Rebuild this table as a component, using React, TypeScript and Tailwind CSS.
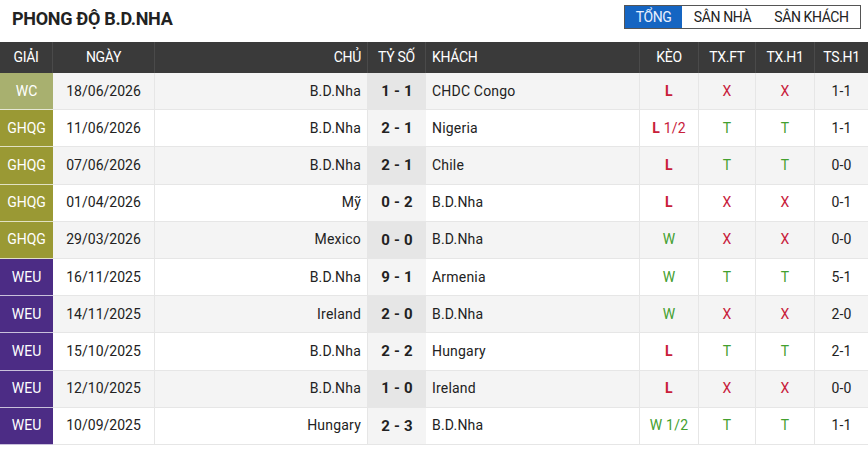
import React from "react";

type Row = {
  league: "WC" | "GHQG" | "WEU";
  date: string;
  home: string;
  score: string;
  away: string;
  keo: string;
  txft: "T" | "X";
  txh1: "T" | "X";
  tsh1: string;
};

const rows: Row[] = [
  { league: "WC", date: "18/06/2026", home: "B.D.Nha", score: "1 - 1", away: "CHDC Congo", keo: "L", txft: "X", txh1: "X", tsh1: "1-1" },
  { league: "GHQG", date: "11/06/2026", home: "B.D.Nha", score: "2 - 1", away: "Nigeria", keo: "L 1/2", txft: "T", txh1: "T", tsh1: "1-1" },
  { league: "GHQG", date: "07/06/2026", home: "B.D.Nha", score: "2 - 1", away: "Chile", keo: "L", txft: "T", txh1: "T", tsh1: "0-0" },
  { league: "GHQG", date: "01/04/2026", home: "Mỹ", score: "0 - 2", away: "B.D.Nha", keo: "L", txft: "X", txh1: "X", tsh1: "0-1" },
  { league: "GHQG", date: "29/03/2026", home: "Mexico", score: "0 - 0", away: "B.D.Nha", keo: "W", txft: "X", txh1: "X", tsh1: "0-0" },
  { league: "WEU", date: "16/11/2025", home: "B.D.Nha", score: "9 - 1", away: "Armenia", keo: "W", txft: "T", txh1: "T", tsh1: "5-1" },
  { league: "WEU", date: "14/11/2025", home: "Ireland", score: "2 - 0", away: "B.D.Nha", keo: "W", txft: "X", txh1: "X", tsh1: "2-0" },
  { league: "WEU", date: "15/10/2025", home: "B.D.Nha", score: "2 - 2", away: "Hungary", keo: "L", txft: "T", txh1: "T", tsh1: "2-1" },
  { league: "WEU", date: "12/10/2025", home: "B.D.Nha", score: "1 - 0", away: "Ireland", keo: "L", txft: "X", txh1: "X", tsh1: "0-0" },
  { league: "WEU", date: "10/09/2025", home: "Hungary", score: "2 - 3", away: "B.D.Nha", keo: "W 1/2", txft: "T", txh1: "T", tsh1: "1-1" },
];

const leagueBg: Record<Row["league"], string> = {
  WC: "bg-[#a8b06f]",
  GHQG: "bg-[#9a9934]",
  WEU: "bg-[#4c2c85]",
};

const RED = "text-[#c8203a]";
const GREEN = "text-[#43a02f]";

function Keo({ v }: { v: string }) {
  const isW = v.startsWith("W");
  const [a, b] = v.split(" ");
  return (
    <span className={isW ? GREEN : RED}>
      <span className={isW ? "" : "font-bold"}>{a}</span>
      {b ? <span> {b}</span> : null}
    </span>
  );
}

const cols = "grid grid-cols-[53px_102px_213px_58px_214px_59px_57px_59px_53px]";

export default function App() {
  return (
    <div className="w-[868px] h-[451px] bg-white overflow-hidden" style={{ fontFamily: "Roboto, 'Liberation Sans', sans-serif" }}>
      <div className="h-[42px] flex items-start justify-between">
        <div className="pl-[12px] pt-[5px] text-[18px] font-bold text-[#222] tracking-[-0.3px]">PHONG ĐỘ B.D.NHA</div>
        <div className="mt-[5px] mr-[7px] flex h-[24px] border border-[#555] text-[14px] tracking-[-0.4px]">
          <div className="w-[57px] bg-[#1565c2] text-[#e8f0ff] flex items-center justify-center">TỔNG</div>
          <div className="w-[81px] text-[#222] flex items-center justify-center">SÂN NHÀ</div>
          <div className="w-[97px] text-[#222] flex items-center justify-center">SÂN KHÁCH</div>
        </div>
      </div>
      <div className={`${cols} h-[31px] bg-[#3a3a3a] text-white text-[14px] tracking-[-0.3px]`}>
        <div className="flex items-center justify-center border-r border-[#4a4a4a]">GIẢI</div>
        <div className="flex items-center justify-center border-r border-[#4a4a4a]">NGÀY</div>
        <div className="flex items-center justify-end pr-[6px] border-r border-[#4a4a4a]">CHỦ</div>
        <div className="flex items-center justify-center border-r border-[#4a4a4a]">TỶ SỐ</div>
        <div className="flex items-center justify-start pl-[6px] border-r border-[#4a4a4a]">KHÁCH</div>
        <div className="flex items-center justify-center border-r border-[#4a4a4a]">KÈO</div>
        <div className="flex items-center justify-center border-r border-[#4a4a4a]">TX.FT</div>
        <div className="flex items-center justify-center border-r border-[#4a4a4a]">TX.H1</div>
        <div className="flex items-center justify-center">TS.H1</div>
      </div>
      {rows.map((r, i) => {
        const odd = i % 2 === 0;
        const rowBg = odd ? "bg-[#f4f4f4]" : "bg-white";
        const scoreBg = odd ? "bg-[#e6e6e6]" : "bg-[#f4f4f4]";
        return (
          <div key={i} className={`${cols} h-[37.2px] text-[14px] text-[#222] tracking-[0.2px] ${rowBg}`}>
            <div className={`${leagueBg[r.league]} text-white tracking-normal flex items-center justify-center border-b border-white/70`}>{r.league}</div>
            <div className="flex items-center justify-center border-r border-b border-[#e6e6e6] tracking-normal">{r.date}</div>
            <div className="flex items-center justify-end pr-[6px] border-r border-b border-[#e6e6e6]">{r.home}</div>
            <div className={`${scoreBg} flex items-center justify-center font-bold text-[15px] border-b border-[#e6e6e6]`}>{r.score}</div>
            <div className="flex items-center justify-start pl-[6px] border-r border-b border-[#e6e6e6]">{r.away}</div>
            <div className="flex items-center justify-center border-r border-b border-[#e6e6e6]"><Keo v={r.keo} /></div>
            <div className={`flex items-center justify-center border-r border-b border-[#e6e6e6] ${r.txft === "T" ? GREEN : RED}`}>{r.txft}</div>
            <div className={`flex items-center justify-center border-r border-b border-[#e6e6e6] ${r.txh1 === "T" ? GREEN : RED}`}>{r.txh1}</div>
            <div className="flex items-center justify-center border-b border-[#e6e6e6]">{r.tsh1}</div>
          </div>
        );
      })}
    </div>
  );
}
